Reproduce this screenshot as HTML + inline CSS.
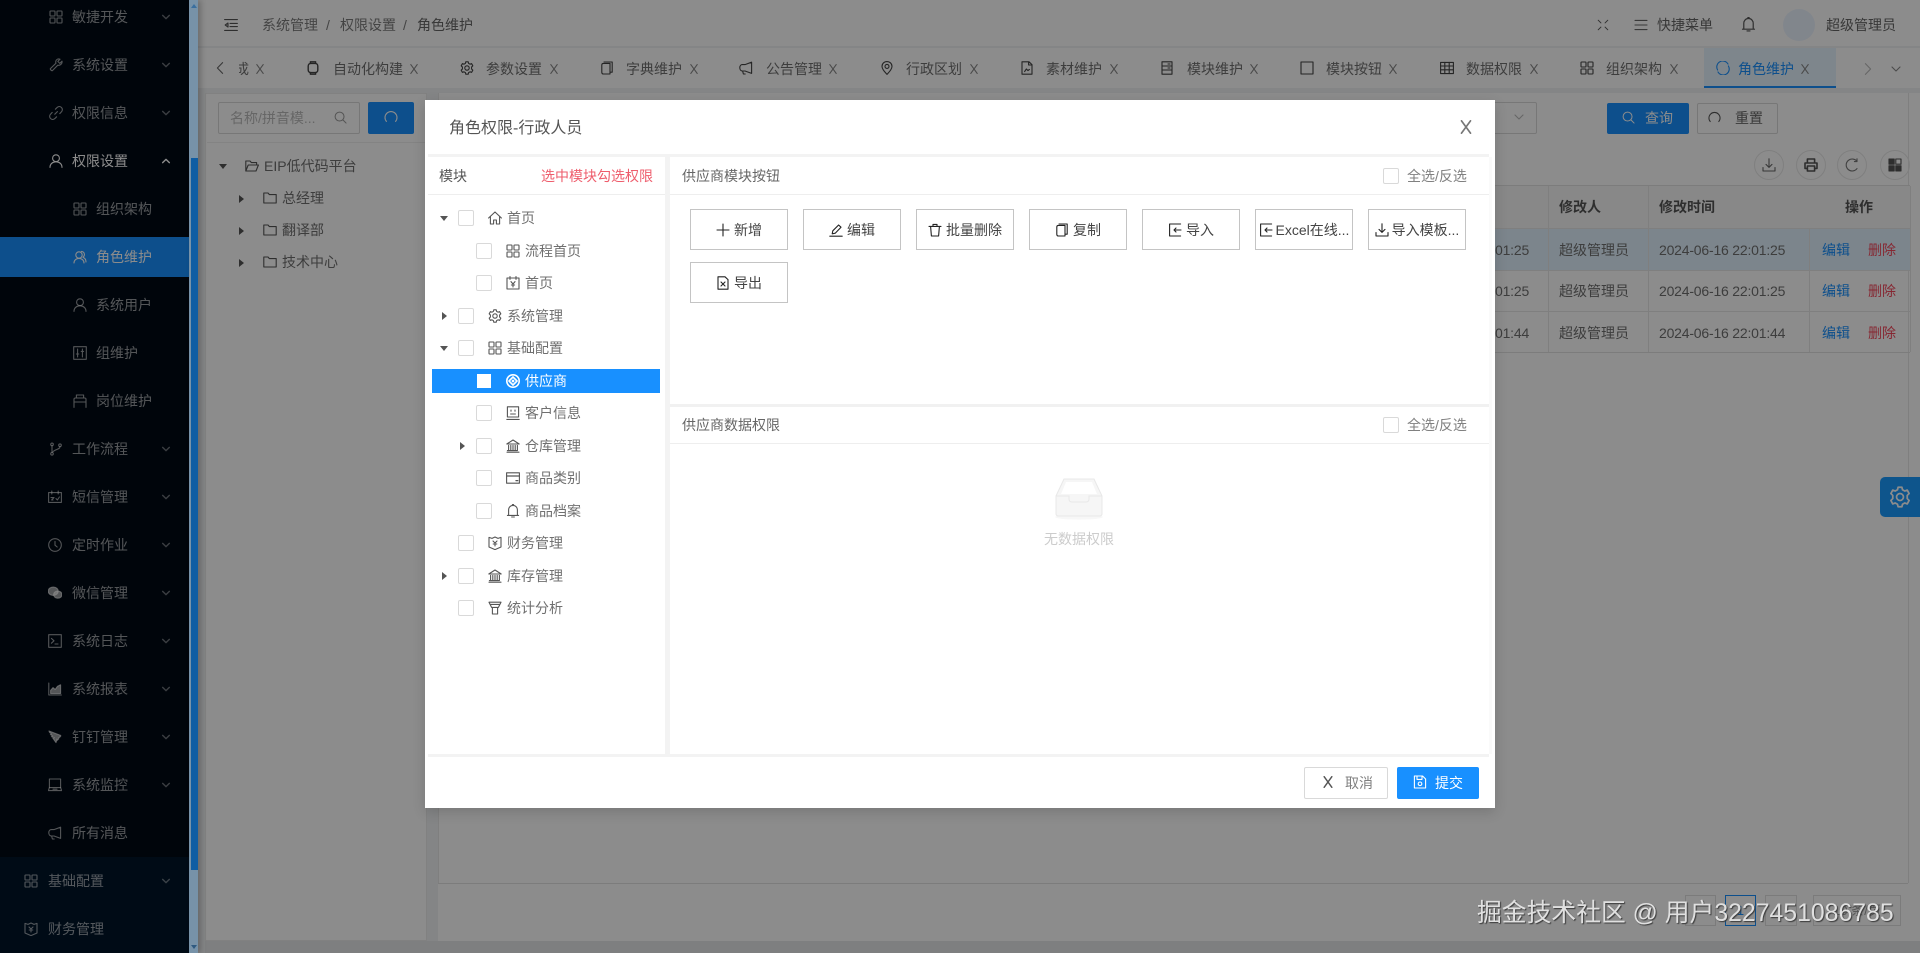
<!DOCTYPE html>
<html lang="zh-CN">
<head>
<meta charset="utf-8">
<title>角色维护</title>
<style>
html,body{margin:0;padding:0;width:1920px;height:953px;overflow:hidden}
body{position:relative;background:#f0f2f5;font-family:"Liberation Sans","Noto Sans CJK SC",sans-serif;font-size:14px;color:#707070}
div,svg,span{box-sizing:border-box}
.a{position:absolute}
.t{position:absolute;white-space:nowrap;line-height:20px;height:20px}
svg.i{position:absolute;fill:none;stroke:currentColor;stroke-width:1.1;stroke-linecap:round;stroke-linejoin:round;overflow:visible}
svg.c{color:rgba(255,255,255,.42);stroke-width:1.7}
svg.k{color:#888}
#side{position:absolute;left:0;top:0;width:189px;height:953px;background:#000a15;color:rgba(255,255,255,.6)}
#side .t{font-size:14px}
.cb{position:absolute;width:16px;height:16px;border:1px solid #d9d9d9;border-radius:2px;background:#fff}
.btn{position:absolute;width:98px;height:41px;border:1px solid #c4c4c4;background:#fff;color:#444;text-align:center;line-height:41px;white-space:nowrap;font-size:14px}
.btn svg.i{position:static;display:inline-block;vertical-align:-2px;margin-right:4px;color:#222}
.tb{position:absolute;top:150px;width:30px;height:30px;border:1px solid #e8e8e8;border-radius:50%}
.pg{position:absolute;top:895px;height:31px;border:1px solid #e0e0e0;background:#fff;text-align:center;line-height:29px;color:#999;font-size:13px}
</style>
</head>
<body>
<svg width="0" height="0" style="position:absolute">
<symbol id="grid" viewBox="0 0 14 14"><rect x="1" y="1" width="5" height="5" rx=".6"/><rect x="8" y="1" width="5" height="5" rx=".6"/><rect x="1" y="8" width="5" height="5" rx=".6"/><rect x="8" y="8" width="5" height="5" rx=".6"/></symbol>
<symbol id="tool" viewBox="0 0 14 14"><path d="M13 3.2 10.8 5.4 8.8 3.4 11 1.2C9.2.4 7.2 1.3 6.8 3.2 6.6 4 6.8 4.8 7 5.2L1.4 10.6C.8 11.2 2.8 13.2 3.4 12.6L8.8 7.2C10.8 7.8 13.6 6 13 3.2Z"/></symbol>
<symbol id="link" viewBox="0 0 14 14"><path d="M5.8 8.2 8.4 5.6M6.4 3.2 8.2 1.4C9.6.2 11.4.4 12.6 1.6 13.6 2.8 13.6 4.6 12.6 5.6L10.8 7.6M7.6 10.8 5.8 12.6C4.4 13.8 2.6 13.6 1.4 12.4.4 11.2.4 9.4 1.4 8.4L3.2 6.4"/></symbol>
<symbol id="user" viewBox="0 0 14 14"><circle cx="7" cy="4.2" r="3.4"/><path d="M1 13.4C1 10 3.6 7.8 7 7.8S13 10 13 13.4"/></symbol>
<symbol id="team" viewBox="0 0 14 14"><circle cx="6" cy="5" r="3.2"/><path d="M1 13C1 10.4 3 8.4 6 8.4S11 10.4 11 13M8.4 1.4C10.4 1.4 11.6 3 11.4 5 11.2 6 10.8 6.8 10 7.4 11.6 8 13 9.6 13 12"/></symbol>
<symbol id="ctrl" viewBox="0 0 14 14"><rect x=".7" y=".7" width="12.6" height="12.6"/><path d="M4.6 3v8M9.4 3v8M3.4 8h2.4M8.2 5.4h2.4"/></symbol>
<symbol id="post" viewBox="0 0 14 14"><path d="M1 13.4V5.2C1 4.4 1.6 4 2.4 4H11.6C12.4 4 13 4.4 13 5.2V13.4M3.4 4V1H10.6V4M1 8H13"/></symbol>
<symbol id="branch" viewBox="0 0 14 14"><circle cx="3" cy="2.4" r="1.3"/><circle cx="3" cy="11.8" r="1.3"/><circle cx="11" cy="3.2" r="1.3"/><path d="M3 3.8V10.4M11 4.6C11 7.6 6 7 3.4 10.2"/></symbol>
<symbol id="cal" viewBox="0 0 14 14"><rect x=".6" y="2.6" width="12.8" height="9.8"/><path d="M3.8 1V4M10.2 1V4M3 7.6H6M5 10H3.6L6 7.6M8 8.6 9.4 10 11.4 7"/></symbol>
<symbol id="clock" viewBox="0 0 14 14"><circle cx="7" cy="7" r="6.3"/><path d="M7 3.4V7.2L9.2 9"/></symbol>
<symbol id="wx" viewBox="0 0 14 14"><ellipse cx="5.2" cy="5.2" rx="5" ry="4.2" fill="currentColor"/><ellipse cx="9.8" cy="8.6" rx="4.2" ry="3.6" fill="currentColor"/></symbol>
<symbol id="term" viewBox="0 0 14 14"><rect x=".7" y=".7" width="12.6" height="12.6"/><path d="M3.4 4.4 6 6.8 3.4 9.2M7 10H10"/></symbol>
<symbol id="area" viewBox="0 0 14 14"><path d="M.8 1V13H13.4"/><path d="M2.6 11.6V8.4L5 5.6 7.2 7.4 9.4 4.4 12.6 2.8V11.6Z" fill="currentColor"/></symbol>
<symbol id="ding" viewBox="0 0 14 14"><path d="M1 1 12.6 5.4C13.4 6 11.6 7.4 10.4 8L10.8 8.8 8.6 10.8 9 9 8 12.6 4.8 8 6.4 7.8 3.4 6.6 4.6 6 2.4 4.4 3.6 4 1.6 2.4Z" fill="currentColor"/></symbol>
<symbol id="lap" viewBox="0 0 14 14"><rect x="1.4" y="1" width="11.2" height="8.6"/><path d="M.4 12.6H13.6M1.4 9.6 .4 12.6M12.6 9.6 13.6 12.6M5 11.2H9"/></symbol>
<symbol id="sound" viewBox="0 0 14 14"><path d="M12.6 1.2V12.4L6 10H3.4C1.8 10 .8 8.6.8 6.8S1.8 3.6 3.4 3.6H6Z M3.6 10 4.4 13H6.2"/></symbol>
<symbol id="shield" viewBox="0 0 14 14"><path d="M1 1.4 4 2.4 7 1 10 2.4 13 1.4V11L7 13.6 1 11Z"/><path d="M5 5 7 7 9 5M7 7V10M5.2 8H8.8"/></symbol>
<symbol id="home" viewBox="0 0 14 14"><path d="M.6 7 7 1 13.4 7M2.4 5.6V13H5.6V9H8.4V13H11.6V5.6"/></symbol>
<symbol id="money" viewBox="0 0 14 14"><rect x="1" y="2" width="12" height="11"/><path d="M4 .6V3.4M10 .6V3.4M5 5.6 7 8 9 5.6M7 8V11M5.4 9H8.6"/></symbol>
<symbol id="gear" viewBox="0 0 14 14"><circle cx="7" cy="7" r="2.2"/><path d="M5.8.8H8.2L8.6 2.4 10 3.2 11.6 2.6 12.8 4.8 11.6 6V8L12.8 9.2 11.6 11.4 10 10.8 8.6 11.6 8.2 13.2H5.8L5.4 11.6 4 10.8 2.4 11.4 1.2 9.2 2.4 8V6L1.2 4.8 2.4 2.6 4 3.2 5.4 2.4Z"/></symbol>
<symbol id="codep" viewBox="0 0 14 14"><circle cx="7" cy="7" r="6.2" stroke-width="1.6"/><path d="M7 3 11 7 7 11 3 7Z" stroke-width="1.6"/><circle cx="7" cy="7" r=".8" fill="currentColor"/></symbol>
<symbol id="contact" viewBox="0 0 14 14"><rect x="1.4" y=".8" width="11.2" height="10.2"/><path d="M.8 13.4H13.2M5 4V5.2M9 4V5.2M4.6 8H9.4"/></symbol>
<symbol id="bank" viewBox="0 0 14 14"><path d="M.8 5 7 1 13.2 5ZM1 13.2H13M2.6 6.4V11.6H1.4M4.8 6.4V11.6M7 6.4V11.6M9.2 6.4V11.6M11.4 6.4V11.6H1.4"/></symbol>
<symbol id="card" viewBox="0 0 14 14"><rect x=".6" y="1.8" width="12.8" height="10.4"/><path d="M.6 5H13.4M10 9.6H11.8" stroke-width="1.3"/></symbol>
<symbol id="bell" viewBox="0 0 14 14"><path d="M2.6 11.4V6C2.6 3.4 4.4 1.4 7 1.4S11.4 3.4 11.4 6V11.4ZM1.4 11.4H12.6M5.6 13H8.4M6.4.4H7.6"/></symbol>
<symbol id="funnel" viewBox="0 0 14 14"><path d="M1 1.2H13L10.4 6.4H3.6ZM2 3.4H12M4.4 6.4V13H9.6V6.4"/></symbol>
<symbol id="folder" viewBox="0 0 14 14"><path d="M.8 2H5L6.4 3.6H13.2V12H.8Z"/></symbol>
<symbol id="fopen" viewBox="0 0 14 14"><path d="M.8 12V2H5L6.4 3.6H11.6V6M.8 12H11L13.4 6H3.2L.8 12Z"/></symbol>
<symbol id="down" viewBox="0 0 12 12"><path d="M2 4 6 8 10 4"/></symbol>
<symbol id="up" viewBox="0 0 12 12"><path d="M2 8 6 4 10 8"/></symbol>
<symbol id="xx" viewBox="0 0 10 10"><path d="M1.8 .6 8.2 9.4M8.2 .6 1.8 9.4"/></symbol>
<symbol id="search" viewBox="0 0 14 14"><circle cx="6" cy="6" r="4.8"/><path d="M9.6 9.6 13 13"/></symbol>
<symbol id="redo" viewBox="0 0 14 14"><path d="M2.4 11.4A6 6 0 1 1 11.6 11.4"/></symbol>
<symbol id="reload" viewBox="0 0 14 14"><path d="M12 3.4A6 6 0 1 0 12 10.6M12 .8V3.6H9.4"/></symbol>
<symbol id="doc" viewBox="0 0 14 14"><path d="M2 .8H9L12 3.6V13.2H2ZM5 6 9 10M9 6 5 10" /></symbol>
<symbol id="book" viewBox="0 0 14 14"><rect x="2" y=".8" width="10" height="12.4"/><path d="M2 5H12M2 9H12M8 3H10M8 7H10"/></symbol>
<symbol id="chip" viewBox="0 0 14 14"><rect x="2.2" y="2.4" width="9.6" height="9.2" rx="2.6" stroke-width="1.4"/><path d="M4.4 2.4V.8H9.6V2.4M4.4 11.6V13.2H9.6V11.6" stroke-width="1.4"/></symbol>
<symbol id="copy" viewBox="0 0 14 14"><path d="M3.4 2.4H10V13H3.4C2.4 13 1.8 12.4 1.8 11.4V4C1.8 3 2.4 2.4 3.4 2.4ZM4 1H12.2V11.2H10"/></symbol>
<symbol id="pin" viewBox="0 0 14 14"><path d="M7 13.4C4 10 2 7.8 2 5.4 2 2.6 4.2.6 7 .6S12 2.6 12 5.4C12 7.8 10 10 7 13.4Z"/><circle cx="7" cy="5.4" r="2"/></symbol>
<symbol id="file" viewBox="0 0 14 14"><path d="M2 .8H9L12 3.6V13.2H2ZM8.6.8V4H12M4.6 10.6 6.4 8 8 9.6 9.4 8.4"/></symbol>
<symbol id="sq" viewBox="0 0 14 14"><rect x="1" y="1" width="12" height="12"/></symbol>
<symbol id="table" viewBox="0 0 14 14"><rect x=".6" y="1.4" width="12.8" height="11.2"/><path d="M.6 5H13.4M.6 8.8H13.4M4.8 1.4V12.6M9.2 1.4V12.6"/></symbol>
<symbol id="role" viewBox="0 0 14 14"><path d="M1.6 9A6 6 0 0 1 12 3M12.4 5A6 6 0 0 1 2 11"/></symbol>
<symbol id="left" viewBox="0 0 10 14"><path d="M7.6 1.6 2.4 7 7.6 12.4"/></symbol>
<symbol id="right" viewBox="0 0 10 14"><path d="M2.4 1.6 7.6 7 2.4 12.4"/></symbol>
<symbol id="ham" viewBox="0 0 14 14"><path d="M.6 1.6H13.4M6 5.4H13.4M6 8.6H13.4M.6 12.4H13.4M4 5 1.2 7 4 9Z"/></symbol>
<symbol id="exp" viewBox="0 0 14 14"><path d="M1.4 1.4 4.6 4.6M12.6 1.4 9.4 4.6M1.4 12.6 4.6 9.4M12.6 12.6 9.4 9.4"/></symbol>
<symbol id="list" viewBox="0 0 14 14"><path d="M1 2.4H13M1 7H13M1 11.6H13"/></symbol>
<symbol id="plus" viewBox="0 0 14 14"><path d="M7 1V13M1 7H13"/></symbol>
<symbol id="edit" viewBox="0 0 14 14"><path d="M.8 13.2H13.2M3.2 10.8 3.8 7.8 9.6 2 12 4.2 6.2 10.2Z"/></symbol>
<symbol id="trash" viewBox="0 0 14 14"><path d="M1 3.4H13M5 3.4V1.4H9V3.4M2.6 3.4 3.4 13H10.6L11.4 3.4"/></symbol>
<symbol id="imp" viewBox="0 0 14 14"><path d="M12.6 1H1.6V13H12.6M13 7H6M8 5 6 7 8 9"/></symbol>
<symbol id="dl" viewBox="0 0 14 14"><path d="M7 .8V9.4M4 6.4 7 9.4 10 6.4M1 9.6V13H13V9.6"/></symbol>
<symbol id="print" viewBox="0 0 14 14"><path d="M3.4 5V1H10.6V5M3.4 10.4H1V5H13V10.4H10.6M3.4 8H10.6V13H3.4Z" stroke-width="1.6"/></symbol>
<symbol id="save" viewBox="0 0 14 14"><path d="M1.4 1H9.6L12.6 4V13H1.4ZM4 1V4.4H9V1M7 7A1.8 1.8 0 1 0 7.01 7"/></symbol>
<symbol id="apps" viewBox="0 0 14 14"><rect x="1" y="1" width="5.2" height="5.2" fill="currentColor"/><rect x="7.8" y="1" width="5.2" height="5.2"/><rect x="1" y="7.8" width="5.2" height="5.2" fill="currentColor"/><rect x="7.8" y="7.8" width="5.2" height="5.2" fill="currentColor"/></symbol>
</svg>

<!-- sidebar -->
<div id="side">
<div class="a" style="left:0;top:857px;width:189px;height:96px;background:#001529"></div>
<div class="a" style="left:0;top:237px;width:189px;height:40px;background:#1890ff"></div>

<svg class="i" style="left:49px;top:10px;width:14px;height:14px"><use href="#grid"/></svg><span class="t" style="left:72px;top:7px">敏捷开发</span><svg class="i c" style="left:161px;top:12px;width:10px;height:10px"><use href="#down"/></svg>
<svg class="i" style="left:49px;top:58px;width:14px;height:14px"><use href="#tool"/></svg><span class="t" style="left:72px;top:55px">系统设置</span><svg class="i c" style="left:161px;top:60px;width:10px;height:10px"><use href="#down"/></svg>
<svg class="i" style="left:49px;top:106px;width:14px;height:14px"><use href="#link"/></svg><span class="t" style="left:72px;top:103px">权限信息</span><svg class="i c" style="left:161px;top:108px;width:10px;height:10px"><use href="#down"/></svg>
<svg class="i" style="left:49px;top:154px;width:14px;height:14px;color:#fff"><use href="#user"/></svg><span class="t" style="left:72px;top:151px;color:#fff">权限设置</span><svg class="i c" style="left:161px;top:156px;width:10px;height:10px;color:#fff"><use href="#up"/></svg>

<svg class="i" style="left:73px;top:202px;width:14px;height:14px"><use href="#grid"/></svg><span class="t" style="left:96px;top:199px">组织架构</span>
<svg class="i" style="left:73px;top:250px;width:14px;height:14px;color:#fff"><use href="#team"/></svg><span class="t" style="left:96px;top:247px;color:#fff">角色维护</span>
<svg class="i" style="left:73px;top:298px;width:14px;height:14px"><use href="#user"/></svg><span class="t" style="left:96px;top:295px">系统用户</span>
<svg class="i" style="left:73px;top:346px;width:14px;height:14px"><use href="#ctrl"/></svg><span class="t" style="left:96px;top:343px">组维护</span>
<svg class="i" style="left:73px;top:394px;width:14px;height:14px"><use href="#post"/></svg><span class="t" style="left:96px;top:391px">岗位维护</span>

<svg class="i" style="left:49px;top:442px;width:14px;height:14px"><use href="#branch"/></svg><span class="t" style="left:72px;top:439px">工作流程</span><svg class="i c" style="left:161px;top:444px;width:10px;height:10px"><use href="#down"/></svg>
<svg class="i" style="left:48px;top:490px;width:14px;height:14px"><use href="#cal"/></svg><span class="t" style="left:72px;top:487px">短信管理</span><svg class="i c" style="left:161px;top:492px;width:10px;height:10px"><use href="#down"/></svg>
<svg class="i" style="left:48px;top:538px;width:14px;height:14px"><use href="#clock"/></svg><span class="t" style="left:72px;top:535px">定时作业</span><svg class="i c" style="left:161px;top:540px;width:10px;height:10px"><use href="#down"/></svg>
<svg class="i" style="left:48px;top:586px;width:14px;height:14px"><use href="#wx"/></svg><span class="t" style="left:72px;top:583px">微信管理</span><svg class="i c" style="left:161px;top:588px;width:10px;height:10px"><use href="#down"/></svg>
<svg class="i" style="left:48px;top:634px;width:14px;height:14px"><use href="#term"/></svg><span class="t" style="left:72px;top:631px">系统日志</span><svg class="i c" style="left:161px;top:636px;width:10px;height:10px"><use href="#down"/></svg>
<svg class="i" style="left:48px;top:682px;width:14px;height:14px"><use href="#area"/></svg><span class="t" style="left:72px;top:679px">系统报表</span><svg class="i c" style="left:161px;top:684px;width:10px;height:10px"><use href="#down"/></svg>
<svg class="i" style="left:48px;top:730px;width:14px;height:14px"><use href="#ding"/></svg><span class="t" style="left:72px;top:727px">钉钉管理</span><svg class="i c" style="left:161px;top:732px;width:10px;height:10px"><use href="#down"/></svg>
<svg class="i" style="left:48px;top:778px;width:14px;height:14px"><use href="#lap"/></svg><span class="t" style="left:72px;top:775px">系统监控</span><svg class="i c" style="left:161px;top:780px;width:10px;height:10px"><use href="#down"/></svg>
<svg class="i" style="left:48px;top:826px;width:14px;height:14px"><use href="#sound"/></svg><span class="t" style="left:72px;top:823px">所有消息</span>

<svg class="i" style="left:24px;top:874px;width:14px;height:14px"><use href="#grid"/></svg><span class="t" style="left:48px;top:871px">基础配置</span><svg class="i c" style="left:161px;top:876px;width:10px;height:10px"><use href="#down"/></svg>
<svg class="i" style="left:24px;top:922px;width:14px;height:14px"><use href="#shield"/></svg><span class="t" style="left:48px;top:919px">财务管理</span>
</div>

<!-- header -->
<div class="a" style="left:198px;top:0;width:1722px;height:46px;background:#fff"></div>
<div class="a" style="left:198px;top:48px;width:1722px;height:40px;background:#fff"></div>
<svg class="i" style="left:224px;top:18px;width:14px;height:14px;color:#555"><use href="#ham"/></svg>
<span class="t" style="left:262px;top:15px;color:#7c7c7c">系统管理</span>
<span class="t" style="left:326px;top:15px;color:#7c7c7c">/</span>
<span class="t" style="left:340px;top:15px;color:#7c7c7c">权限设置</span>
<span class="t" style="left:403px;top:15px;color:#7c7c7c">/</span>
<span class="t" style="left:417px;top:15px;color:#666">角色维护</span>
<svg class="i" style="left:1597px;top:19px;width:12px;height:12px;color:#555"><use href="#exp"/></svg>
<svg class="i" style="left:1634px;top:18px;width:14px;height:14px;color:#666"><use href="#list"/></svg>
<span class="t" style="left:1657px;top:15px;color:#666">快捷菜单</span>
<svg class="i" style="left:1741px;top:17px;width:15px;height:15px;color:#555"><use href="#bell"/></svg>
<div class="a" style="left:1783px;top:9px;width:32px;height:32px;border-radius:50%;background:#ecf4ff"></div>
<span class="t" style="left:1826px;top:15px;color:#666">超级管理员</span>

<!-- tabs -->
<div class="a" style="left:1704px;top:48px;width:132px;height:40px;background:#e6f4ff;border-bottom:2px solid #1890ff"></div>
<svg class="i" style="left:215px;top:61px;width:10px;height:14px;color:#666"><use href="#left"/></svg>
<span class="t" style="left:239px;top:59px;width:10px;overflow:hidden"><span style="margin-left:-4px">成</span></span>
<svg class="i k" style="left:255px;top:64px;width:10px;height:10px"><use href="#xx"/></svg>

<svg class="i" style="left:306px;top:61px;width:14px;height:14px;color:#444"><use href="#chip"/></svg><span class="t" style="left:333px;top:59px">自动化构建</span><svg class="i k" style="left:409px;top:64px;width:10px;height:10px"><use href="#xx"/></svg>
<svg class="i" style="left:460px;top:61px;width:14px;height:14px;color:#444"><use href="#gear"/></svg><span class="t" style="left:486px;top:59px">参数设置</span><svg class="i k" style="left:549px;top:64px;width:10px;height:10px"><use href="#xx"/></svg>
<svg class="i" style="left:600px;top:61px;width:14px;height:14px;color:#444"><use href="#copy"/></svg><span class="t" style="left:626px;top:59px">字典维护</span><svg class="i k" style="left:689px;top:64px;width:10px;height:10px"><use href="#xx"/></svg>
<svg class="i" style="left:739px;top:61px;width:14px;height:14px;color:#444"><use href="#sound"/></svg><span class="t" style="left:766px;top:59px">公告管理</span><svg class="i k" style="left:828px;top:64px;width:10px;height:10px"><use href="#xx"/></svg>
<svg class="i" style="left:880px;top:61px;width:14px;height:14px;color:#444"><use href="#pin"/></svg><span class="t" style="left:906px;top:59px">行政区划</span><svg class="i k" style="left:969px;top:64px;width:10px;height:10px"><use href="#xx"/></svg>
<svg class="i" style="left:1020px;top:61px;width:14px;height:14px;color:#444"><use href="#file"/></svg><span class="t" style="left:1046px;top:59px">素材维护</span><svg class="i k" style="left:1109px;top:64px;width:10px;height:10px"><use href="#xx"/></svg>
<svg class="i" style="left:1160px;top:61px;width:14px;height:14px;color:#444"><use href="#book"/></svg><span class="t" style="left:1187px;top:59px">模块维护</span><svg class="i k" style="left:1249px;top:64px;width:10px;height:10px"><use href="#xx"/></svg>
<svg class="i" style="left:1300px;top:61px;width:14px;height:14px;color:#444"><use href="#sq"/></svg><span class="t" style="left:1326px;top:59px">模块按钮</span><svg class="i k" style="left:1388px;top:64px;width:10px;height:10px"><use href="#xx"/></svg>
<svg class="i" style="left:1440px;top:61px;width:14px;height:14px;color:#444"><use href="#table"/></svg><span class="t" style="left:1466px;top:59px">数据权限</span><svg class="i k" style="left:1529px;top:64px;width:10px;height:10px"><use href="#xx"/></svg>
<svg class="i" style="left:1580px;top:61px;width:14px;height:14px;color:#444"><use href="#grid"/></svg><span class="t" style="left:1606px;top:59px">组织架构</span><svg class="i k" style="left:1669px;top:64px;width:10px;height:10px"><use href="#xx"/></svg>
<svg class="i" style="left:1716px;top:61px;width:14px;height:14px;color:#1890ff"><use href="#role"/></svg><span class="t" style="left:1738px;top:59px;color:#1890ff">角色维护</span><svg class="i k" style="left:1800px;top:64px;width:10px;height:10px"><use href="#xx"/></svg>
<svg class="i" style="left:1863px;top:62px;width:10px;height:14px;color:#bbb"><use href="#right"/></svg>
<svg class="i" style="left:1890px;top:63px;width:12px;height:12px;color:#888"><use href="#down"/></svg>

<!-- left tree panel -->
<div class="a" style="left:205px;top:93px;width:222px;height:848px;background:#fff;border:1px solid #ececec"></div>
<div class="a" style="left:218px;top:102px;width:142px;height:32px;border:1px solid #d9d9d9;border-radius:2px;background:#fff"></div>
<span class="t" style="left:230px;top:108px;color:#bbb">名称/拼音模...</span>
<svg class="i" style="left:334px;top:111px;width:13px;height:13px;color:#999"><use href="#search"/></svg>
<div class="a" style="left:368px;top:102px;width:46px;height:32px;background:#1890ff;border-radius:2px"></div>
<svg class="i" style="left:384px;top:110px;width:14px;height:14px;color:#fff"><use href="#redo"/></svg>
<div class="a" style="left:207px;top:142px;width:218px;height:1px;background:#eee"></div>
<div class="a" style="left:219px;top:164px;border:4px solid transparent;border-top:5px solid #555;border-bottom:0"></div>
<svg class="i" style="left:245px;top:159px;width:14px;height:14px;color:#555"><use href="#fopen"/></svg><span class="t" style="left:264px;top:156px">EIP低代码平台</span>
<div class="a" style="left:239px;top:195px;border:4px solid transparent;border-left:5px solid #555;border-right:0"></div>
<svg class="i" style="left:263px;top:191px;width:14px;height:14px;color:#555"><use href="#folder"/></svg><span class="t" style="left:282px;top:188px">总经理</span>
<div class="a" style="left:239px;top:227px;border:4px solid transparent;border-left:5px solid #555;border-right:0"></div>
<svg class="i" style="left:263px;top:223px;width:14px;height:14px;color:#555"><use href="#folder"/></svg><span class="t" style="left:282px;top:220px">翻译部</span>
<div class="a" style="left:239px;top:259px;border:4px solid transparent;border-left:5px solid #555;border-right:0"></div>
<svg class="i" style="left:263px;top:255px;width:14px;height:14px;color:#555"><use href="#folder"/></svg><span class="t" style="left:282px;top:252px">技术中心</span>

<!-- right panel -->
<div class="a" style="left:438px;top:93px;width:1482px;height:848px;background:#fff"></div>
<div class="a" style="left:438px;top:883px;width:1470px;height:1px;background:#e2e2e2"></div>
<div class="a" style="left:438px;top:93px;width:1px;height:790px;background:#e8e8e8"></div>
<div class="a" style="left:1908px;top:93px;width:1px;height:790px;background:#e8e8e8"></div>

<div class="a" style="left:1440px;top:102px;width:97px;height:32px;border:1px solid #d9d9d9;border-radius:2px"></div>
<svg class="i" style="left:1513px;top:111px;width:12px;height:12px;color:#bbb"><use href="#down"/></svg>
<div class="a" style="left:1607px;top:103px;width:82px;height:31px;background:#1890ff;border-radius:2px"></div>
<svg class="i" style="left:1622px;top:111px;width:13px;height:13px;color:#fff"><use href="#search"/></svg><span class="t" style="left:1645px;top:108px;color:#fff">查询</span>
<div class="a" style="left:1697px;top:103px;width:81px;height:31px;border:1px solid #d9d9d9;border-radius:2px"></div>
<svg class="i" style="left:1708px;top:111px;width:13px;height:13px;color:#555"><use href="#redo"/></svg><span class="t" style="left:1735px;top:108px;color:#666">重置</span>

<div class="tb" style="left:1754px"></div><div class="tb" style="left:1796px"></div><div class="tb" style="left:1837px"></div><div class="tb" style="left:1880px"></div>
<svg class="i" style="left:1762px;top:158px;width:14px;height:14px;color:#666"><use href="#dl"/></svg>
<svg class="i" style="left:1804px;top:158px;width:14px;height:14px;color:#555"><use href="#print"/></svg>
<svg class="i" style="left:1845px;top:158px;width:14px;height:14px;color:#777"><use href="#reload"/></svg>
<svg class="i" style="left:1888px;top:158px;width:14px;height:14px;color:#555"><use href="#apps"/></svg>

<div class="a" style="left:1440px;top:185px;width:470px;height:1px;background:#e2e2e2"></div>
<div class="a" style="left:1440px;top:186px;width:470px;height:42px;background:#f7f7f7"></div>
<div class="a" style="left:1440px;top:228px;width:470px;height:42px;background:#e2f3ff"></div>
<div class="a" style="left:1440px;top:228px;width:470px;height:1px;background:#e8e8e8"></div>
<div class="a" style="left:1440px;top:270px;width:470px;height:1px;background:#e8e8e8"></div>
<div class="a" style="left:1440px;top:311px;width:470px;height:1px;background:#e8e8e8"></div>
<div class="a" style="left:1440px;top:352px;width:470px;height:1px;background:#e2e2e2"></div>
<div class="a" style="left:1548px;top:186px;width:1px;height:166px;background:#e8e8e8"></div>
<div class="a" style="left:1648px;top:186px;width:1px;height:166px;background:#e8e8e8"></div>
<div class="a" style="left:1809px;top:229px;width:1px;height:123px;background:#e8e8e8"></div>
<div class="a" style="left:1910px;top:186px;width:1px;height:166px;background:#e8e8e8"></div>

<span class="t" style="left:1559px;top:197px;font-weight:700;color:#555">修改人</span>
<span class="t" style="left:1659px;top:197px;font-weight:700;color:#555">修改时间</span>
<span class="t" style="left:1845px;top:197px;font-weight:700;color:#555">操作</span>

<span class="t" style="left:1495px;top:240px;letter-spacing:-.2px">01:25</span>
<span class="t" style="left:1559px;top:240px">超级管理员</span>
<span class="t" style="left:1659px;top:240px;letter-spacing:-.2px">2024-06-16 22:01:25</span>
<span class="t" style="left:1822px;top:240px;color:#1890ff">编辑</span>
<span class="t" style="left:1868px;top:240px;color:#f5475b">删除</span>

<span class="t" style="left:1495px;top:281px;letter-spacing:-.2px">01:25</span>
<span class="t" style="left:1559px;top:281px">超级管理员</span>
<span class="t" style="left:1659px;top:281px;letter-spacing:-.2px">2024-06-16 22:01:25</span>
<span class="t" style="left:1822px;top:281px;color:#1890ff">编辑</span>
<span class="t" style="left:1868px;top:281px;color:#f5475b">删除</span>

<span class="t" style="left:1495px;top:323px;letter-spacing:-.2px">01:44</span>
<span class="t" style="left:1559px;top:323px">超级管理员</span>
<span class="t" style="left:1659px;top:323px;letter-spacing:-.2px">2024-06-16 22:01:44</span>
<span class="t" style="left:1822px;top:323px;color:#1890ff">编辑</span>
<span class="t" style="left:1868px;top:323px;color:#f5475b">删除</span>

<div class="pg" style="left:1685px;width:31px"></div>
<div class="pg" style="left:1725px;width:31px;border-color:#1890ff;color:#1890ff">1</div>
<div class="pg" style="left:1765px;width:32px"></div>
<div class="pg" style="left:1813px;width:88px">10 条/页</div>

<!-- settings float -->
<div class="a" style="left:1880px;top:477px;width:40px;height:40px;background:#1a9bff;border-radius:5px 0 0 5px"></div>
<svg class="i" style="left:1889px;top:486px;width:22px;height:22px;color:#fff"><use href="#gear"/></svg>

<!-- mask -->
<div class="a" style="left:0;top:0;width:1920px;height:953px;background:rgba(0,0,0,.45)"></div>

<!-- scrollbar above mask -->
<div class="a" style="left:189px;top:0;width:9px;height:953px;background:#7792a8;box-shadow:3px 0 6px rgba(0,0,0,.22)"></div>
<div class="a" style="left:191px;top:158px;width:7px;height:712px;background:#0f5da3"></div>
<div class="a" style="left:191px;top:4px;border:3.5px solid transparent;border-bottom:4px solid #3a6f9f;border-top:0"></div>
<div class="a" style="left:191px;top:945px;border:3.5px solid transparent;border-top:4px solid #2f5a80;border-bottom:0"></div>

<!-- modal -->
<div class="a" style="left:425px;top:100px;width:1070px;height:708px;background:#fff;box-shadow:0 4px 12px rgba(0,0,0,.15)">
  <span class="t" style="left:24px;top:19px;font-size:16px;color:#555">角色权限-行政人员</span>
  <svg class="i" style="left:1034px;top:20px;width:14px;height:14px;color:#777;stroke-width:1.2"><use href="#xx"/></svg>
  <div class="a" style="left:3px;top:54px;width:1061px;height:3px;background:#f3f3f3"></div>
  <div class="a" style="left:3px;top:654px;width:1061px;height:3px;background:#f3f3f3"></div>
  <div class="a" style="left:240px;top:54px;width:5px;height:603px;background:#f3f3f3"></div>
  <div class="a" style="left:1064px;top:57px;width:3px;height:597px;background:#fafafa"></div>
  <div class="a" style="left:3px;top:94px;width:237px;height:1px;background:#eee"></div>
  <span class="t" style="left:14px;top:66px;color:#555">模块</span>
  <span class="t" style="left:116px;top:66px;color:#ee5d6c">选中模块勾选权限</span>
</div>

<!-- modal tree -->
<div class="a" style="left:432px;top:369px;width:228px;height:24px;background:#1890ff"></div>
<div class="a" style="left:440px;top:216px;border:4px solid transparent;border-top:5px solid #555;border-bottom:0"></div>
<div class="a" style="left:442px;top:312px;border:4px solid transparent;border-left:5px solid #555;border-right:0"></div>
<div class="a" style="left:440px;top:346px;border:4px solid transparent;border-top:5px solid #555;border-bottom:0"></div>
<div class="a" style="left:460px;top:442px;border:4px solid transparent;border-left:5px solid #555;border-right:0"></div>
<div class="a" style="left:442px;top:572px;border:4px solid transparent;border-left:5px solid #555;border-right:0"></div>

<div class="cb" style="left:458px;top:210px"></div><svg class="i" style="left:488px;top:211px;width:14px;height:14px;color:#555"><use href="#home"/></svg><span class="t" style="left:507px;top:208px">首页</span>
<div class="cb" style="left:476px;top:243px"></div><svg class="i" style="left:506px;top:244px;width:14px;height:14px;color:#555"><use href="#grid"/></svg><span class="t" style="left:525px;top:241px">流程首页</span>
<div class="cb" style="left:476px;top:275px"></div><svg class="i" style="left:506px;top:276px;width:14px;height:14px;color:#555"><use href="#money"/></svg><span class="t" style="left:525px;top:273px">首页</span>
<div class="cb" style="left:458px;top:308px"></div><svg class="i" style="left:488px;top:309px;width:14px;height:14px;color:#555"><use href="#gear"/></svg><span class="t" style="left:507px;top:306px">系统管理</span>
<div class="cb" style="left:458px;top:340px"></div><svg class="i" style="left:488px;top:341px;width:14px;height:14px;color:#555"><use href="#grid"/></svg><span class="t" style="left:507px;top:338px">基础配置</span>
<div class="a" style="left:477px;top:374px;width:14px;height:14px;background:#fff"></div><svg class="i" style="left:506px;top:374px;width:14px;height:14px;color:#fff"><use href="#codep"/></svg><span class="t" style="left:525px;top:371px;color:#fff">供应商</span>
<div class="cb" style="left:476px;top:405px"></div><svg class="i" style="left:506px;top:406px;width:14px;height:14px;color:#555"><use href="#contact"/></svg><span class="t" style="left:525px;top:403px">客户信息</span>
<div class="cb" style="left:476px;top:438px"></div><svg class="i" style="left:506px;top:439px;width:14px;height:14px;color:#555"><use href="#bank"/></svg><span class="t" style="left:525px;top:436px">仓库管理</span>
<div class="cb" style="left:476px;top:470px"></div><svg class="i" style="left:506px;top:471px;width:14px;height:14px;color:#555"><use href="#card"/></svg><span class="t" style="left:525px;top:468px">商品类别</span>
<div class="cb" style="left:476px;top:503px"></div><svg class="i" style="left:506px;top:504px;width:14px;height:14px;color:#555"><use href="#bell"/></svg><span class="t" style="left:525px;top:501px">商品档案</span>
<div class="cb" style="left:458px;top:535px"></div><svg class="i" style="left:488px;top:536px;width:14px;height:14px;color:#555"><use href="#shield"/></svg><span class="t" style="left:507px;top:533px">财务管理</span>
<div class="cb" style="left:458px;top:568px"></div><svg class="i" style="left:488px;top:569px;width:14px;height:14px;color:#555"><use href="#bank"/></svg><span class="t" style="left:507px;top:566px">库存管理</span>
<div class="cb" style="left:458px;top:600px"></div><svg class="i" style="left:488px;top:601px;width:14px;height:14px;color:#555"><use href="#funnel"/></svg><span class="t" style="left:507px;top:598px">统计分析</span>

<!-- right modal panels -->
<span class="t" style="left:682px;top:166px;color:#666">供应商模块按钮</span>
<div class="cb" style="left:1383px;top:168px"></div><span class="t" style="left:1407px;top:166px;color:#808080">全选/反选</span>
<div class="a" style="left:670px;top:194px;width:819px;height:1px;background:#eee"></div>

<div class="btn" style="left:690px;top:209px"><svg class="i" width="14" height="14"><use href="#plus"/></svg>新增</div>
<div class="btn" style="left:803px;top:209px"><svg class="i" width="14" height="14"><use href="#edit"/></svg>编辑</div>
<div class="btn" style="left:916px;top:209px"><svg class="i" width="14" height="14"><use href="#trash"/></svg>批量删除</div>
<div class="btn" style="left:1029px;top:209px"><svg class="i" width="14" height="14"><use href="#copy"/></svg>复制</div>
<div class="btn" style="left:1142px;top:209px"><svg class="i" width="14" height="14"><use href="#imp"/></svg>导入</div>
<div class="btn" style="left:1255px;top:209px"><svg class="i" width="14" height="14" style="margin-right:3px"><use href="#imp"/></svg>Excel在线...</div>
<div class="btn" style="left:1368px;top:209px"><svg class="i" width="14" height="14" style="margin-right:3px"><use href="#dl"/></svg>导入模板...</div>
<div class="btn" style="left:690px;top:262px"><svg class="i" width="14" height="14"><use href="#doc"/></svg>导出</div>

<div class="a" style="left:670px;top:404px;width:819px;height:3px;background:#f1f1f1"></div>
<span class="t" style="left:682px;top:415px;color:#666">供应商数据权限</span>
<div class="cb" style="left:1383px;top:417px"></div><span class="t" style="left:1407px;top:415px;color:#808080">全选/反选</span>
<div class="a" style="left:670px;top:443px;width:819px;height:1px;background:#eee"></div>

<svg class="a" style="left:1054px;top:478px;width:50px;height:42px" viewBox="0 0 50 42">
<ellipse cx="25" cy="39" rx="24" ry="2.6" fill="#f7f7f7"/>
<path d="M2 18 10 1H40L48 18V36C48 37 47 38 46 38H4C3 38 2 37 2 36Z" fill="#f6f6f6" stroke="#e8e8e8"/>
<path d="M7 16 12 4H38L43 16" fill="#fff" stroke="none"/>
<path d="M2 18H15V21C15 23 16 24 18 24H32C34 24 35 23 35 21V18H48" fill="none" stroke="#e8e8e8"/>
</svg>
<span class="t" style="left:1044px;top:529px;color:#ccc">无数据权限</span>

<!-- footer -->
<div class="a" style="left:1304px;top:767px;width:84px;height:32px;border:1px solid #d9d9d9;border-radius:2px;background:#fff"></div>
<svg class="i" style="left:1322px;top:776px;width:12px;height:12px;color:#555;stroke-width:1.2"><use href="#xx"/></svg>
<span class="t" style="left:1345px;top:773px;color:#808080">取消</span>
<div class="a" style="left:1397px;top:767px;width:82px;height:32px;background:#1890ff;border-radius:2px"></div>
<svg class="i" style="left:1413px;top:775px;width:14px;height:14px;color:#fff"><use href="#save"/></svg>
<span class="t" style="left:1435px;top:773px;color:#fff">提交</span>

<!-- bottom band + watermark -->
<div class="a" style="left:205px;top:941px;width:1715px;height:12px;background:rgba(0,0,0,.04)"></div>
<div class="a" style="left:1477px;top:897px;white-space:nowrap;line-height:34px;font-size:24.8px;color:#e0e0e0;text-shadow:1px 1px 1px #3a3a3a">掘金技术社区 @ 用户3227451086785</div>
</body>
</html>
